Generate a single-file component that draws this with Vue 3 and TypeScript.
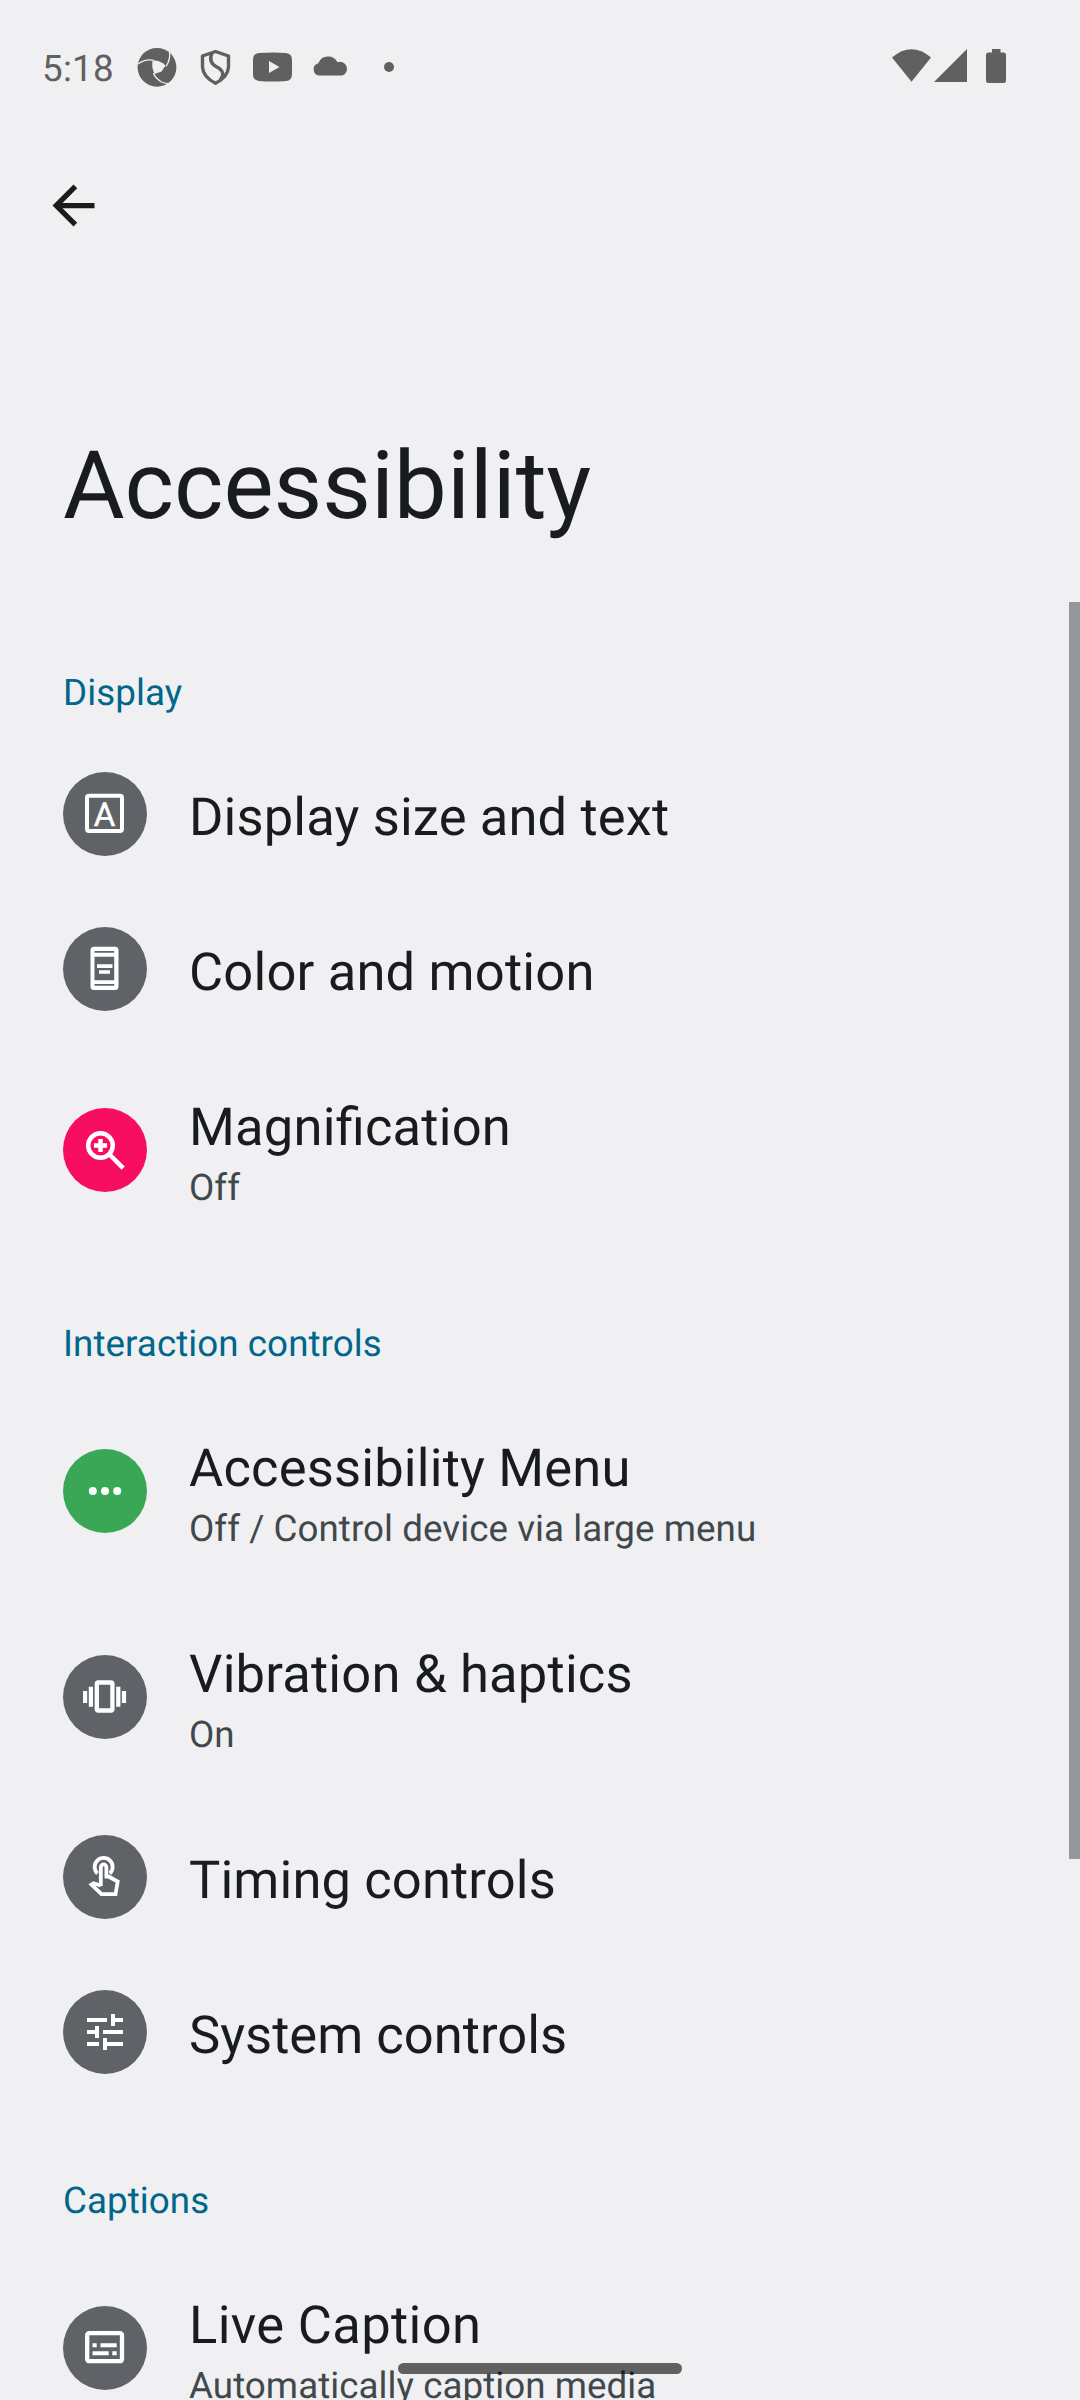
<script setup lang="ts">
type IconName = 'text' | 'color' | 'magnify' | 'menu' | 'vibration' | 'touch' | 'tune' | 'caption'

interface Item {
  title: string
  summary?: string
  icon: IconName
  tone?: 'pink' | 'green'
  /** Letter spacing of the title, in pixels. */
  tracking: number
}

interface Section {
  heading: string
  items: Item[]
}

const sections: Section[] = [
  {
    heading: 'Display',
    items: [
      { title: 'Display size and text', icon: 'text', tracking: 0.14 },
      { title: 'Color and motion', icon: 'color', tracking: 0.18 },
      { title: 'Magnification', summary: 'Off', icon: 'magnify', tone: 'pink', tracking: 0.2 },
    ],
  },
  {
    heading: 'Interaction controls',
    items: [
      { title: 'Accessibility Menu', summary: 'Off / Control device via large menu', icon: 'menu', tone: 'green', tracking: 0.17 },
      { title: 'Vibration & haptics', summary: 'On', icon: 'vibration', tracking: 0.2 },
      { title: 'Timing controls', icon: 'touch', tracking: 0.12 },
      { title: 'System controls', icon: 'tune', tracking: 0.02 },
    ],
  },
  {
    heading: 'Captions',
    items: [{ title: 'Live Caption', summary: 'Automatically caption media', icon: 'caption', tracking: 0.35 }],
  },
]
</script>

<template>
  <main class="screen">
    <header class="status">
      <span class="clock">5:18</span>
      <svg class="notifications" width="270" height="48" viewBox="130 44 270 48">
        <circle cx="157" cy="67.3" r="19.4" />
        <g class="cut">
          <path d="M152.800 60.500Q160 60 165.500 65.500L161.500 71.500L154.500 74Q151 66 152.800 60.500Z" />
          <path class="gap" d="M138 64Q146 58.500 153.500 60.500M169.500 51.500Q170.500 60 166 66.500M175 83Q168 84.500 161.500 82Q155 78 153.500 73" />
        </g>
        <g class="line">
          <path d="M215.500 51.500L228.500 56V67Q228 77 215.500 83.200Q203 77 202.500 67V56Z" />
          <path d="M212 53Q208 62 216 66.500Q227 72 220 80" />
        </g>
        <path d="M259 53Q272.500 52 286 53Q292 53.500 292 60V74Q292 80.500 286 81Q272.500 82 259 81Q253 80.500 253 74V60Q253 53.500 259 53ZM269 61V73L279.500 67Z" fill-rule="evenodd" />
        <path d="M319 75.500A6.300 6.300 0 0 1 318.300 63.200A10.500 10.500 0 0 1 337.500 62.300A6.700 6.700 0 0 1 342.500 75.500Z" />
        <circle cx="389" cy="67" r="5" />
      </svg>
      <svg class="system" width="120" height="48" viewBox="888 44 120 48">
        <path d="M892 57.500Q911.500 41 931 57.500L911.500 81.700Z" />
        <path d="M934 82L967 49V82Z" />
        <path d="M992 49H1000.500V52.500H1003.500Q1006 52.500 1006 55V80.500Q1006 83 1003.500 83H988.500Q986 83 986 80.500V55Q986 52.500 988.500 52.500H992Z" />
      </svg>
    </header>

    <nav class="toolbar">
      <svg width="63" height="63" viewBox="0 0 24 24">
        <path d="M20 11H7.830l5.590-5.590L12 4l-8 8 8 8 1.410-1.410L7.830 13H20z" />
      </svg>
    </nav>

    <h1>Accessibility</h1>

    <section v-for="section in sections" :key="section.heading">
      <h2>{{ section.heading }}</h2>
      <article v-for="item in section.items" :key="item.title" class="row" :class="{ tall: item.summary }">
        <svg class="badge" :class="item.tone" viewBox="0 0 84 84" width="84" height="84">
          <g v-if="item.icon === 'text'">
            <rect class="stroke" x="24" y="23.700" width="35" height="35.300" rx="2" stroke-width="4" />
            <text x="41.500" y="53.700">A</text>
          </g>
          <path
            v-else-if="item.icon === 'color'"
            fill-rule="evenodd"
            d="M31 19.700H52Q55.500 19.700 55.500 23.200V59.500Q55.500 63 52 63H31Q27.500 63 27.500 59.500V23.200Q27.500 19.700 31 19.700ZM31.500 24V25.800H51.200V24ZM31.500 29.700V53.300H51.200V29.700ZM31.500 57V58.800H51.200V57ZM34 37.300H49.500V41H34ZM36 43.300H47V46.700H36Z"
          />
          <g v-else-if="item.icon === 'magnify'" class="stroke" stroke-width="4.500">
            <circle cx="37.500" cy="37.500" r="12.300" />
            <path d="M46.500 46.500L60.200 60.200M37.500 30.900V44.100M30.900 37.500H44.100" />
          </g>
          <g v-else-if="item.icon === 'menu'">
            <circle cx="29.800" cy="42" r="4" />
            <circle cx="42" cy="42" r="4" />
            <circle cx="54.200" cy="42" r="4" />
          </g>
          <g v-else-if="item.icon === 'vibration'">
            <rect class="stroke" x="33.800" y="27.500" width="15.600" height="28" rx="1.500" stroke-width="4.300" />
            <path d="M20 36H24.200V48H20ZM25.800 31.700H30V51.700H25.800ZM53.200 31.700H57.400V51.700H53.200ZM58.900 36H63.100V48H58.900Z" />
          </g>
          <g v-else-if="item.icon === 'touch'" class="stroke" stroke-width="3.800">
            <path d="M34.500 38.500A9 9 0 1 1 46.800 38.500" />
            <path d="M37.800 51V32.200A2.700 2.700 0 0 1 43.400 32.200V41.500H45.500L54.700 46.500L52.500 59.200H38.500L28.500 49.500L30.500 48.300L37.800 50.500" />
          </g>
          <path
            v-else-if="item.icon === 'tune'"
            transform="translate(18 18) scale(2)"
            d="M3 17v2h6v-2H3zM3 5v2h10V5H3zm10 16v-2h8v-2h-8v-2h-2v6h2zM7 9v2H3v2h4v2h2V9H7zm14 4v-2H11v2h10zm-6-4h2V7h4V5h-4V3h-2v6z"
          />
          <g v-else>
            <rect class="stroke" x="24.200" y="27.200" width="34.800" height="28" rx="2" stroke-width="4.300" />
            <path d="M29.500 37.300H33.700V41.300H29.500ZM37.500 37.300H53.700V41.300H37.500ZM29.500 45.300H45.700V49.300H29.500ZM49.300 45.300H53.700V49.300H49.300Z" />
          </g>
        </svg>
        <div class="copy">
          <h3 :style="{ letterSpacing: `${item.tracking}px` }">{{ item.title }}</h3>
          <p v-if="item.summary">{{ item.summary }}</p>
        </div>
      </article>
    </section>

    <div class="scrollbar"></div>
    <div class="home-handle"></div>
  </main>
</template>

<style>
body {
  margin: 0;
  background: #f0f0f2;
}
</style>

<style scoped>
.screen {
  position: relative;
  width: 1080px;
  height: 2400px;
  overflow: hidden;
  background: #f0f0f2;
  color: #191c1d;
  font-family: Roboto, sans-serif;
  text-rendering: geometricPrecision;
}

h1,
h2,
h3,
p {
  margin: 0;
  font-weight: 400;
  white-space: nowrap;
}

.status {
  display: flex;
  box-sizing: border-box;
  height: 136px;
  padding: 44px 72px 0 42px;
  color: #606060;
  fill: #606060;
}

.clock {
  width: 88px;
  padding-top: 3px;
  font-size: 36.75px;
  letter-spacing: 0.25px;
  line-height: 43px;
}

.system {
  margin-left: auto;
}

.cut {
  fill: #f0f0f2;
}

.cut .gap {
  fill: none;
  stroke: #f0f0f2;
  stroke-width: 1.3;
}

.line {
  fill: none;
  stroke: #606060;
  stroke-width: 3.4;
  stroke-linejoin: round;
}

.toolbar {
  box-sizing: border-box;
  height: 154px;
  padding: 38px 0 0 42px;
  fill: #1b1b1b;
}

h1 {
  box-sizing: border-box;
  height: 312px;
  padding: 141px 0 0 63px;
  font-size: 94.5px;
  letter-spacing: -0.05px;
  line-height: 111px;
}

h2 {
  box-sizing: border-box;
  height: 135px;
  padding: 69px 0 0 63px;
  color: #00668b;
  font-size: 36.75px;
  letter-spacing: 0.06px;
  line-height: 43px;
}

.row {
  display: flex;
  align-items: flex-start;
  gap: 42px;
  box-sizing: border-box;
  height: 155px;
  padding-left: 63px;
}

.row.tall {
  height: 206px;
}

.badge {
  flex: none;
  margin-top: 35px;
  border-radius: 50%;
  background: #5f6368;
  fill: #fff;
}

.tall .badge {
  margin-top: 61px;
}

.badge.pink {
  background: #f80e60;
}

.badge.green {
  background: #3aa757;
}

.badge .stroke {
  fill: none;
  stroke: #fff;
}

.badge text {
  font-size: 33px;
  font-weight: 400;
  text-anchor: middle;
  stroke: #fff;
  stroke-width: 0.4;
}

.copy {
  padding-top: 49px;
}

h3 {
  font-size: 52.5px;
  font-feature-settings: 'liga' 1;
  line-height: 62px;
}

p {
  margin-top: 8px;
  color: #40484c;
  font-size: 36.75px;
  letter-spacing: 0.05px;
  font-feature-settings: 'liga' 1;
  line-height: 43px;
}

.scrollbar {
  position: absolute;
  top: 602px;
  right: 0;
  width: 11px;
  height: 1257px;
  background: #94989c;
}

.home-handle {
  position: absolute;
  top: 2363px;
  left: 398px;
  width: 284px;
  height: 11px;
  border-radius: 6px;
  background: rgba(0, 0, 0, 0.6);
}
</style>
